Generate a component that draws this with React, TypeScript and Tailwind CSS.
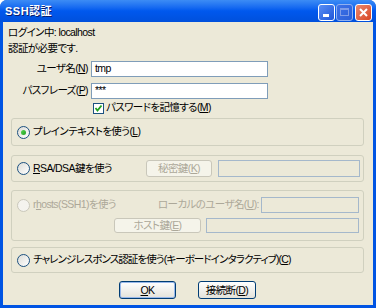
import React from 'react';

const font = "font-['Liberation_Sans','Noto_Sans_CJK_JP',sans-serif] [font-feature-settings:'palt']";

function Radio({ checked = false, disabled = false }: { checked?: boolean; disabled?: boolean }) {
  return (
    <span
      className={`flex items-center justify-center w-[13px] h-[13px] rounded-full border shrink-0 ${
        disabled ? 'border-[#CAC8BB] bg-[#F4F3EE]' : 'border-[#1C5180] bg-gradient-to-br from-[#DCDCD7] to-white'
      }`}
    >
      {checked && <span className="w-[5px] h-[5px] rounded-full bg-gradient-to-br from-[#55D551] to-[#21A121]" />}
    </span>
  );
}

function Btn({ children, disabled = false, width, h = 'h-[18px]', isDefault = false }: { children: React.ReactNode; disabled?: boolean; width: string; h?: string; isDefault?: boolean }) {
  return (
    <div
      className={`${width} ${h} flex items-center justify-center rounded-[3px] border leading-none whitespace-nowrap ${
        disabled
          ? 'border-[#C9C7BA] bg-[#F5F4EA] text-[#ACA899]'
          : `border-[#003C74] bg-gradient-to-b from-white to-[#E3E2DA] text-black ${isDefault ? 'shadow-[inset_0_0_0_1px_#98B8EA]' : ''}`
      }`}
    >
      {children}
    </div>
  );
}

function Field({ value = '', width, disabled = false, h = 'h-[16px]' }: { value?: string; width: string; disabled?: boolean; h?: string }) {
  return (
    <div
      className={`${width} ${h} border flex items-center px-[3px] ${
        disabled ? 'border-[#A5B8CB] bg-[#ECE9D8]' : 'border-[#7F9DB9] bg-white'
      }`}
    >
      {value}
    </div>
  );
}

function Group({ children, h }: { children: React.ReactNode; h: string }) {
  return (
    <div className={`ml-[8px] w-[353px] ${h} border border-[#D0D0BF] rounded-[3px] pl-[5px]`}>{children}</div>
  );
}

export default function App() {
  return (
    <div className={`w-[376px] h-[308px] bg-[#0054E3] rounded-t-[7px] flex flex-col ${font}`}>
      <div className="h-[22px] flex items-center justify-between pl-[5px] pr-[4px] rounded-t-[7px] bg-gradient-to-b from-[#3C8CF5] via-[#0058EE] to-[#0050DC]">
        <span className="text-white font-bold text-[11px] tracking-[0.5px] [text-shadow:1px_1px_0_#0A1E6E]">SSH認証</span>
        <div className="flex gap-[1px] mt-[2px]">
          <div className="w-[17px] h-[17px] rounded-[3px] border border-white bg-gradient-to-br from-[#5A8EF5] to-[#1F55D8] flex items-end pl-[4px] pb-[3px]">
            <div className="w-[6px] h-[3px] bg-white" />
          </div>
          <div className="w-[17px] h-[17px] rounded-[3px] border border-[#8FB0F0] bg-gradient-to-br from-[#3D72E8] to-[#2B5FD8] flex items-center justify-center">
            <div className="w-[9px] h-[8px] border border-[#7E9CE8] border-t-2" />
          </div>
          <div className="ml-[1px] w-[17px] h-[17px] rounded-[3px] border border-white bg-gradient-to-br from-[#E9876D] to-[#D8431E] flex items-center justify-center">
            <svg width="9" height="9" viewBox="0 0 9 9">
              <path d="M1 1L8 8M8 1L1 8" stroke="white" strokeWidth="2" />
            </svg>
          </div>
        </div>
      </div>
      <div className="flex-1 mx-[3px] mb-[3px] bg-[#ECE9D8] flex flex-col pt-[2px] text-[10.5px] tracking-[-0.6px] text-black">
        <div className="h-4 leading-4 pl-[5px]">ログイン中: localhost</div>
        <div className="h-4 leading-4 pl-[5px]">認証が必要です.</div>

        <div className="mt-[5px] flex items-center h-[16px]">
          <span className="w-[85px] text-right">ユーザ名(<u>N</u>)</span>
          <div className="ml-[3px]"><Field value="tmp" width="w-[177px]" /></div>
        </div>
        <div className="mt-[6px] flex items-center h-[16px]">
          <span className="w-[85px] text-right">パスフレーズ(<u>P</u>)</span>
          <div className="ml-[3px]"><Field value="***" width="w-[177px]" /></div>
        </div>
        <div className="mt-[2px] h-[14px] flex items-center pl-[90px] gap-[2px]">
          <span className="w-[11px] h-[11px] border border-[#1C5180] bg-white flex items-center justify-center">
            <svg width="9" height="9" viewBox="0 0 9 9">
              <path d="M1.5 4L3.5 6.5L7.5 1.5" stroke="#21A121" strokeWidth="1.8" fill="none" />
            </svg>
          </span>
          <span>パスワードを記憶する(<u>M</u>)</span>
        </div>

        <div className="mt-[3px]">
          <Group h="h-[28px]">
            <div className="h-full flex items-center gap-[3px]">
              <Radio checked />
              <span>プレインテキストを使う(<u>L</u>)</span>
            </div>
          </Group>
        </div>

        <div className="mt-[9px]">
          <Group h="h-[27px]">
            <div className="h-full flex items-center">
              <div className="w-[129px] flex items-center gap-[3px]">
                <Radio />
                <span><u>R</u>SA/DSA鍵を使う</span>
              </div>
              <Btn width="w-[66px]" h="h-[17px]" disabled>秘密鍵(<u>K</u>)</Btn>
              <div className="ml-[6px]"><Field width="w-[142px]" h="h-[17px]" disabled /></div>
            </div>
          </Group>
        </div>

        <div className="mt-[8px]">
          <Group h="h-[51px]">
            <div className="flex flex-col pt-[6px] text-[#ACA899]">
              <div className="h-[16px] flex items-center">
                <div className="w-[141px] flex items-center gap-[3px]">
                  <Radio disabled />
                  <span className="whitespace-nowrap">r<u>h</u>osts(SSH1)を使う</span>
                </div>
                <span className="w-[103px] whitespace-nowrap">ローカルのユーザ名(<u>U</u>):</span>
                <Field width="w-[98px]" disabled />
              </div>
              <div className="mt-[5px] h-[15px] flex items-center">
                <div className="w-[97px]" />
                <Btn width="w-[87px]" h="h-[15px]" disabled>ホスト鍵(<u>E</u>)</Btn>
                <div className="ml-[5px]"><Field width="w-[153px]" h="h-[15px]" disabled /></div>
              </div>
            </div>
          </Group>
        </div>

        <div className="mt-[6px]">
          <Group h="h-[26px]">
            <div className="h-full flex items-center gap-[3px]">
              <Radio />
              <span className="whitespace-nowrap tracking-[-0.9px]">チャレンジレスポンス認証を使う(キーボードインタラクティブ)(<u>C</u>)</span>
            </div>
          </Group>
        </div>

        <div className="mt-[8px] flex pl-[116px] gap-[22px]">
          <Btn width="w-[57px]" isDefault><u>O</u>K</Btn>
          <Btn width="w-[58px]">接続断(<u>D</u>)</Btn>
        </div>
      </div>
    </div>
  );
}
